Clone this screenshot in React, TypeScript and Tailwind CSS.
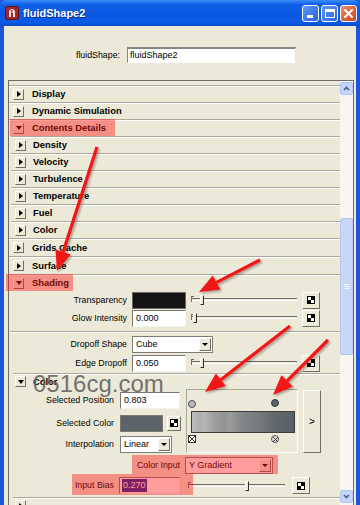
import clsx from "clsx";

const LINE = "border-t border-[#aca899] shadow-[inset_0_1px_0_#ffffff]";
const RAISED = "bg-[#ece9d8] border border-t-white border-l-white border-r-[#716f64] border-b-[#716f64]";
const SUNKEN = "bg-white border border-t-[#7a7870] border-l-[#7a7870] border-r-[#f4f3ee] border-b-[#f4f3ee]";

function Toggle({ open }: { open?: boolean }) {
  return (
    <span className={clsx("w-[11px] h-[11px] shrink-0 flex items-center justify-center", RAISED)}>
      {open ? (
        <span className="border-x-[3px] border-x-transparent border-t-[4px] border-t-black" />
      ) : (
        <span className="border-y-[3px] border-y-transparent border-l-[4px] border-l-black ml-[1px]" />
      )}
    </span>
  );
}

function Header({ label, open, child, tall }: { label: string; open?: boolean; child?: boolean; tall?: boolean }) {
  return (
    <div className={clsx("shrink-0 flex items-center", tall ? "h-[18px]" : "h-[17px]", LINE, child ? "ml-[2px] pl-[4px]" : "pl-[4px]")}>
      <Toggle open={open} />
      <span className={clsx("text-[9.4px] font-bold leading-none", child ? "ml-[7px]" : "ml-[8px]")}>{label}</span>
    </div>
  );
}

function MapBtn({ className, small }: { className?: string; small?: boolean }) {
  return (
    <div className={clsx("flex items-center justify-center shrink-0", RAISED, small ? "w-[14px] h-[15px]" : "w-[18px] h-[17px]", className)}>
      <div className="grid grid-cols-2 w-[8px] h-[8px] border border-black">
        <span className="bg-white" />
        <span className="bg-black" />
        <span className="bg-black" />
        <span className="bg-white" />
      </div>
    </div>
  );
}

function Slider({ className, thumb }: { className: string; thumb: string }) {
  return (
    <div className={clsx("relative h-[18px] shrink-0", className)}>
      <div className="absolute left-0 right-0 top-[7px] h-[3px] border-t border-[#6f6d66] border-b border-b-white" />
      <div className="absolute left-0 top-[5px] w-[3px] h-[6px] border-l border-t border-[#6f6d66]" />
      <div className={clsx("absolute top-[4px] w-[4px] h-[10px] bg-[#ece9d8] border border-t-white border-l-white border-r-[#2e2e2e] border-b-[#2e2e2e]", thumb)} />
    </div>
  );
}

function Field({ value, className, selected }: { value: string; className: string; selected?: boolean }) {
  return (
    <div className={clsx("h-[17px] flex items-center shrink-0", SUNKEN, className)}>
      <span className={clsx("ml-[2px] text-[9px] leading-none px-[1px] py-[2px]", selected ? "bg-[#1f2a9a] text-white" : "")}>{value}</span>
    </div>
  );
}

function Dropdown({ value, className }: { value: string; className: string }) {
  return (
    <div className={clsx("h-[17px] flex items-center shrink-0 bg-white border border-[#7f7d74]", className)}>
      <span className="flex-1 pl-[3px] text-[9px] leading-none">{value}</span>
      <span className={clsx("w-[12px] h-[13px] mr-[1px] flex items-center justify-center", RAISED)}>
        <span className="border-x-[3px] border-x-transparent border-t-[3px] border-t-black" />
      </span>
    </div>
  );
}

function Label({ children, className }: { children: string; className: string }) {
  return <span className={clsx("text-right text-[8.8px] leading-none shrink-0", className)}>{children}</span>;
}

function TitleBar() {
  return (
    <div className="h-[26px] flex items-center bg-[linear-gradient(180deg,#3a8cf6_0%,#0f60e8_18%,#0a58e2_55%,#0c5ce8_85%,#0848c6_100%)] rounded-t-[6px]">
      <svg width="14" height="14" viewBox="0 0 14 14" className="ml-[5px]">
        <rect x="0.5" y="0.5" width="13" height="13" rx="2" fill="#a8262b" stroke="#5a0f12" />
        <path d="M4 11 L4 5 Q5 2.5 7.5 3 Q10 3.5 10 6 L10 11 L8 11 L8 6.5 L6 6.5 L6 11 Z" fill="#f3e6e6" />
        <circle cx="6.5" cy="4.8" r="1" fill="#a8262b" />
      </svg>
      <span className="ml-[4px] text-[11px] font-bold text-white [text-shadow:1px_1px_0_#0a2a8a]">fluidShape2</span>
      <div className="ml-auto mr-[3px] flex gap-[2px]">
        <div className="w-[17px] h-[17px] rounded-[3px] border border-white bg-[linear-gradient(135deg,#5d97f6,#2a62dd)] flex items-end justify-start">
          <span className="ml-[4px] mb-[3px] w-[6px] h-[3px] bg-white" />
        </div>
        <div className="w-[17px] h-[17px] rounded-[3px] border border-white bg-[linear-gradient(135deg,#5d97f6,#2a62dd)] flex items-center justify-center">
          <span className="w-[10px] h-[9px] border border-white border-t-[3px]" />
        </div>
        <div className="w-[17px] h-[17px] rounded-[3px] border border-white bg-[linear-gradient(135deg,#ef8a6a,#cc4220)] flex items-center justify-center">
          <svg width="9" height="9" viewBox="0 0 9 9">
            <path d="M1 1 L8 8 M8 1 L1 8" stroke="white" strokeWidth="2" strokeLinecap="round" />
          </svg>
        </div>
      </div>
    </div>
  );
}

function Scrollbar() {
  return (
    <div className="w-[13px] shrink-0 bg-[#f7f6f1] flex flex-col">
      <div className="mt-[1px] h-[13px] shrink-0 rounded-[2px] bg-[#c6d5fa] border border-[#b1c6f3] flex items-center justify-center">
        <svg width="7" height="5" viewBox="0 0 7 5">
          <path d="M1 4 L3.5 1.5 L6 4" stroke="#4d6185" strokeWidth="1.6" fill="none" />
        </svg>
      </div>
      <div className="h-[123px] shrink-0" />
      <div className="h-[137px] shrink-0 rounded-[2px] bg-[#c8d7f8] border border-[#b4c8f4] flex flex-col items-center justify-center gap-[1px]">
        <span className="w-[6px] h-[1px] bg-[#eef3fe]" />
        <span className="w-[6px] h-[1px] bg-[#eef3fe]" />
        <span className="w-[6px] h-[1px] bg-[#eef3fe]" />
      </div>
      <div className="h-[135px] shrink-0" />
      <div className="h-[13px] shrink-0 rounded-[2px] bg-[#c6d5fa] border border-[#b1c6f3] flex items-center justify-center">
        <svg width="7" height="5" viewBox="0 0 7 5">
          <path d="M1 1 L3.5 3.5 L6 1" stroke="#4d6185" strokeWidth="1.6" fill="none" />
        </svg>
      </div>
    </div>
  );
}

function Ramp() {
  return (
    <div className="ml-[6px] w-[112px] h-[64px] border border-t-[#aca899] border-l-[#aca899] border-r-white border-b-white relative shrink-0">
      <span className="absolute left-[1px] top-[10px] w-[8px] h-[8px] rounded-full bg-[#b9b9b9] border border-[#505050]" />
      <span className="absolute left-[84px] top-[9px] w-[8px] h-[8px] rounded-full bg-[#5a6269] border border-[#3a3a3a]" />
      <div className="absolute left-[4px] top-[21px] w-[104px] h-[22px] border border-[#3c3c3c] bg-[linear-gradient(90deg,#bdbdbd_0%,#adadad_8%,#b6b6b6_12%,#9e9e9e_22%,#939393_32%,#9c9c9c_37%,#858789_48%,#7c7f82_58%,#73787c_68%,#62696e_80%,#5c6469_90%,#596167_100%)]" />
      <span className="absolute left-[1px] top-[45px] w-[8px] h-[8px] border border-[#333] bg-white flex items-center justify-center">
        <svg width="6" height="6" viewBox="0 0 6 6"><path d="M0 0 L6 6 M6 0 L0 6" stroke="#333" strokeWidth="1" /></svg>
      </span>
      <span className="absolute left-[84px] top-[45px] w-[8px] h-[8px] rounded-full border border-[#555] bg-[#ddd] flex items-center justify-center">
        <svg width="5" height="5" viewBox="0 0 5 5"><path d="M0 0 L5 5 M5 0 L0 5" stroke="#444" strokeWidth="1" /></svg>
      </span>
    </div>
  );
}

function Shading() {
  return (
    <div>
      <div className="h-[18px] flex items-center">
        <Label className="w-[118px]">Transparency</Label>
        <div className="ml-[5px] w-[54px] h-[17px] bg-[#141414] border border-[#6a6a6a] shrink-0" />
        <Slider className="ml-[5px] w-[106px]" thumb="left-[9px]" />
        <MapBtn className="ml-[5px]" />
      </div>
      <div className="h-[18px] flex items-center">
        <Label className="w-[118px]">Glow Intensity</Label>
        <Field value="0.000" className="ml-[5px] w-[54px]" />
        <Slider className="ml-[5px] w-[106px]" thumb="left-[2px]" />
        <MapBtn className="ml-[5px]" />
      </div>
      <div className={clsx("mt-[4px] h-[3px] ml-[1px]", LINE)} />
      <div className="mt-[1px] h-[18px] flex items-center">
        <Label className="w-[118px]">Dropoff Shape</Label>
        <Dropdown value="Cube" className="ml-[5px] w-[81px]" />
      </div>
      <div className="mt-[1px] h-[18px] flex items-center">
        <Label className="w-[118px]">Edge Dropoff</Label>
        <Field value="0.050" className="ml-[5px] w-[54px]" />
        <Slider className="ml-[5px] w-[106px]" thumb="left-[9px]" />
        <MapBtn className="ml-[5px]" />
      </div>
      <div className={clsx("mt-[1px] h-[16px] ml-[4px] pl-[2px] flex items-center", LINE)}>
        <Toggle open />
        <span className="ml-[7px] text-[9.4px] font-bold leading-none">Color</span>
      </div>
      <div className="h-[65px] flex">
        <div className="w-[171px] shrink-0 pt-[2px]">
          <div className="h-[18px] flex items-center">
            <Label className="w-[105px]">Selected Position</Label>
            <Field value="0.803" className="ml-[6px] w-[60px]" />
          </div>
          <div className="mt-[5px] h-[18px] flex items-center">
            <Label className="w-[105px]">Selected Color</Label>
            <div className="ml-[6px] w-[43px] h-[17px] bg-[#5c6469] border border-[#7a7870] shrink-0" />
            <MapBtn small className="ml-[4px]" />
          </div>
          <div className="mt-[3px] h-[18px] flex items-center">
            <Label className="w-[105px]">Interpolation</Label>
            <Dropdown value="Linear" className="ml-[6px] w-[52px]" />
          </div>
        </div>
        <Ramp />
        <div className={clsx("ml-[5px] mt-[1px] w-[18px] h-[63px] flex items-center justify-center text-[10px]", RAISED)}>&gt;</div>
      </div>
      <div className="mt-[2px] h-[18px] flex items-center">
        <Label className="w-[171px]">Color Input</Label>
        <Dropdown value="Y Gradient" className="ml-[5px] w-[88px]" />
      </div>
      <div className="mt-[2px] h-[19px] flex items-center">
        <Label className="w-[105px]">Input Bias</Label>
        <Field value="0.270" selected className="ml-[5px] w-[61px]" />
        <Slider className="ml-[8px] w-[97px]" thumb="left-[57px]" />
        <MapBtn className="ml-[7px]" />
      </div>
      <div className={clsx("mt-[2px] h-[16px] ml-[4px] pl-[2px] flex items-start pt-[2px]", LINE)}>
        <Toggle />
      </div>
    </div>
  );
}

function Arrow({ x1, y1, tip, a, b }: { x1: number; y1: number; tip: [number, number]; a: [number, number]; b: [number, number] }) {
  const bx = (a[0] + b[0]) / 2;
  const by = (a[1] + b[1]) / 2;
  return (
    <g filter="url(#sh)">
      <line x1={x1} y1={y1} x2={bx} y2={by} stroke="#f21414" strokeWidth="3.2" />
      <polygon points={`${tip[0]},${tip[1]} ${a[0]},${a[1]} ${b[0]},${b[1]}`} fill="#f21414" />
    </g>
  );
}

export default function App() {
  return (
    <div className="w-[360px] h-[505px] overflow-hidden relative bg-[#1d56d8] font-['Liberation_Sans',Arial,sans-serif] text-black select-none">
      <TitleBar />
      <div className="h-[479px] mx-[4px] bg-[#ece9d8] flex flex-col">
        <div className="h-[54px] pt-[21px] flex items-start shrink-0">
          <div className="h-[16px] flex items-center">
            <Label className="w-[116px]">fluidShape:</Label>
            <div className="ml-[7px] w-[169px] h-[16px] bg-white border-t-2 border-l border-[#858585] border-r border-r-[#e6e4da] border-b border-b-white flex items-center">
              <span className="ml-[2px] text-[9px] leading-none">fluidShape2</span>
            </div>
          </div>
        </div>
        <div className="ml-[4px] mr-[2px] flex-1 min-h-0 flex border-t border-l border-r border-[#6f6d66] overflow-hidden">
          <div className="flex-1 pt-[4px]">
            <Header label="Display" />
            <Header label="Dynamic Simulation" />
            <Header label="Contents Details" open />
            <Header label="Density" child />
            <Header label="Velocity" child />
            <Header label="Turbulence" child />
            <Header label="Temperature" child />
            <Header label="Fuel" child />
            <Header label="Color" child />
            <Header label="Grids Cache" tall />
            <Header label="Surface" tall />
            <Header label="Shading" open />
            <Shading />
          </div>
          <Scrollbar />
        </div>
      </div>

      <span className="absolute left-[33px] top-[372px] text-[24px] leading-none text-[#626262]/90 pointer-events-none">0516cg.com</span>

      <div className="absolute left-[10px] top-[119px] w-[105px] h-[17px] bg-[rgba(255,20,20,0.42)]" />
      <div className="absolute left-[6px] top-[274px] w-[67px] h-[17px] bg-[rgba(255,20,20,0.42)]" />
      <div className="absolute left-[132px] top-[455px] w-[146px] h-[19px] bg-[rgba(255,20,20,0.42)]" />
      <div className="absolute left-[72px] top-[474px] w-[121px] h-[21px] bg-[rgba(255,20,20,0.42)]" />

      <svg className="absolute left-0 top-0 pointer-events-none" width="360" height="505" viewBox="0 0 360 505">
        <defs>
          <filter id="sh" x="-20%" y="-20%" width="140%" height="140%">
            <feDropShadow dx="1.5" dy="1.5" stdDeviation="1.2" floodColor="#000" floodOpacity="0.35" />
          </filter>
        </defs>
        <Arrow x1={97} y1={147} tip={[57, 271]} a={[70.7, 254.5]} b={[55.5, 249.5]} />
        <Arrow x1={260} y1={260} tip={[199, 292]} a={[220.4, 289.4]} b={[212.7, 275.4]} />
        <Arrow x1={290} y1={326} tip={[205, 392]} a={[225.7, 386]} b={[215.9, 373.4]} />
        <Arrow x1={328} y1={340} tip={[273, 395]} a={[292.8, 386.6]} b={[281.4, 375.2]} />
      </svg>
    </div>
  );
}
